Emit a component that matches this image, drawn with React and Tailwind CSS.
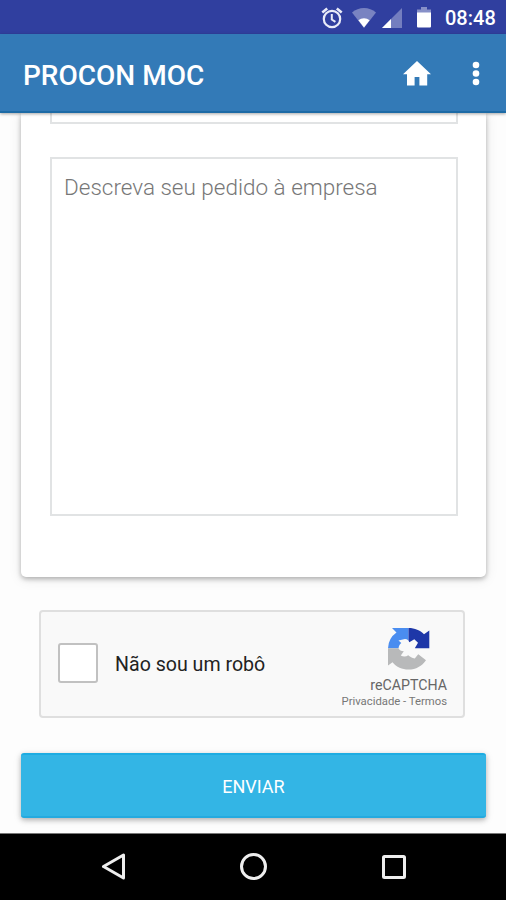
import { useState } from "react";

const AlarmIcon = () => (
  <svg width="22" height="22" viewBox="0 0 22 22" fill="none" stroke="#e9ebf8">
    <circle cx="11" cy="12" r="8.2" strokeWidth="2.2" />
    <path d="M10.8 7v5.500l3.600 2.300" strokeWidth="2" />
    <path d="M1.300 5.400 6.200 1.500M20.700 5.400 15.800 1.500" strokeWidth="2.6" />
  </svg>
);

const WifiIcon = () => (
  <svg width="24" height="20" viewBox="0 0 24 20">
    <path d="M12 20 0 4.400C3.400 1.600 7.500 0 12 0s8.600 1.600 12 4.400Z" fill="#7983c1" />
    <path d="M12 19.500 6.400 12.200a9 9 0 0 1 11.200 0Z" fill="#fff" />
  </svg>
);

const SignalIcon = () => (
  <svg width="20" height="20" viewBox="0 0 20 20">
    <path d="M0 20 20 0v20Z" fill="#747ebf" />
    <path d="M0 20 9 11v9Z" fill="#fff" />
  </svg>
);

const BatteryIcon = () => (
  <svg width="14" height="21" viewBox="0 0 14 21">
    <path d="M4 0h6v2.500h4V7H0V2.500h4Z" fill="#8790c8" />
    <path d="M0 5.500h14V19.500a1 1 0 0 1-1 1H1a1 1 0 0 1-1-1Z" fill="#fff" />
  </svg>
);

const HomeIcon = () => (
  <svg width="28" height="25" viewBox="0 0 28 25" fill="#fff">
    <path d="M14 0 28 13.200h-3.800V24.500h-7.800v-8.500h-4.800v8.500H4V13.200H0Z" />
  </svg>
);

const RecaptchaLogo = () => (
  <svg width="43" height="43" viewBox="0 0 43 43">
    <path d="M21.500 1H5l4.500 4.500A20 20 0 0 0 1 21.200h20.500Z" fill="#4a8df0" />
    <path d="M21.500 1c6.500 0 11.500 2.300 15.500 6.200l5.300-3.700v17.700H21.500Z" fill="#1e37a8" />
    <path d="M1 21.200v17.300l4.500-3.300C9.500 40 15 42.500 21.500 42.500c7.500 0 13.500-3.500 17.500-9.300l-9.300-7.200-3-4.800Z" fill="#b8b9ba" />
    {/* Pinwheel cutout */}
    <path d="M11.500 21.200c.4-2.500 1.300-4 2.800-5.200L11.500 13.500 18 12c2.400.2 3.700 1.500 4.300 3.200l5-3 3.700 3.600-3.200 5.400 4.200 5-4.200 5.200c-2.800-.5-4.900-1.700-6.600-3.200-2 1.500-4.800 1.700-7.400.3l3-4.300c-2.500 0-4.500-1-5.300-3Z" fill="#f9f9f9" />
  </svg>
);

const StatusBar = () => (
  <div className="h-[34px] shrink-0 bg-[#303f9f] flex items-center justify-end pr-[10px] pt-px">
    <AlarmIcon />
    <div className="ml-[9px]">
      <WifiIcon />
    </div>
    <div className="ml-[6px]">
      <SignalIcon />
    </div>
    <div className="ml-[15px]">
      <BatteryIcon />
    </div>
    <span className="ml-[14px] w-[51px] text-[20px] leading-6 font-medium text-white whitespace-nowrap">
      08:48
    </span>
  </div>
);

const Header = () => (
  <header className="relative z-10 h-[79px] shrink-0 bg-[#337ab7] border-b-2 border-[#1d6ba6] shadow-[0_1px_3px_rgba(0,0,0,0.35)] flex items-center pl-[23px] pr-[26px] pt-[2px]">
    <h1 className="flex-1 text-[28px] font-medium text-white pt-[4px]">
      PROCON MOC
    </h1>
    <button type="button" aria-label="Home">
      <HomeIcon />
    </button>
    <button type="button" aria-label="Menu" className="ml-[41px]">
      <svg width="8" height="25" viewBox="0 0 8 25" fill="#fff">
        <circle cx="4" cy="4" r="3.3" />
        <circle cx="4" cy="12.500" r="3.3" />
        <circle cx="4" cy="21" r="3.3" />
      </svg>
    </button>
  </header>
);

const NavBar = () => (
  <nav className="h-[67px] shrink-0 bg-black border-t border-[#777] flex items-center justify-between pl-[101px] pr-[99px]">
    <svg width="25" height="28" viewBox="0 0 25 28" fill="none" stroke="#eee" strokeWidth="3">
      <path d="M2.500 13.500 22.500 2v23Z" strokeLinejoin="round" />
    </svg>
    <svg width="28" height="28" viewBox="0 0 28 28" fill="none" stroke="#eee" strokeWidth="3">
      <circle cx="13.500" cy="13.500" r="12" />
    </svg>
    <svg width="25" height="25" viewBox="0 0 25 25" fill="none" stroke="#eee" strokeWidth="3">
      <rect x="1.500" y="1.500" width="21" height="21" rx="1" />
    </svg>
  </nav>
);

const App = () => {
  const [request, setRequest] = useState("");
  const [checked, setChecked] = useState(false);

  return (
    <div className="h-[900px] w-full overflow-hidden bg-[#fdfdfd] flex flex-col font-[Roboto,sans-serif]">
      <StatusBar />
      <Header />

      <main className="flex-1 flex flex-col pl-[21px] pr-[20px]">
        {/* Form card */}
        <div className="h-[464px] rounded-b-[5px] bg-white px-[29px] shadow-[0_2px_5px_rgba(0,0,0,0.28),0_2px_14px_rgba(0,0,0,0.09)]">
          <div className="h-[11px] w-[408px] border-x-2 border-b-2 border-[#e1e3e4]" />
          <textarea
            value={request}
            onChange={(e) => setRequest(e.target.value)}
            placeholder="Descreva seu pedido à empresa"
            className="block w-[408px] h-[359px] mt-[33px] px-[12px] py-[12px] border-2 border-[#e1e3e4] bg-white resize-none outline-none text-[22.5px] leading-[32px] font-light text-[#666] placeholder:text-[#777]"
          />
        </div>

        {/* Captcha */}
        <div className="mt-[33px] ml-[18px] w-[426px] h-[108px] rounded-[4px] border-2 border-[#dfdfdf] bg-[#f9f9f9] flex items-center pl-[17px] pr-[16px]">
          <button
            type="button"
            role="checkbox"
            aria-checked={checked}
            aria-label="Não sou um robô"
            onClick={() => setChecked(!checked)}
            className="size-[40px] rounded-[3px] border-2 border-[#c1c1c1] bg-white mb-[2px]"
          />
          <span className="ml-[17px] flex-1 pt-px text-[19.6px] text-[#222] whitespace-nowrap">
            Não sou um robô
          </span>
          <div className="flex flex-col items-end pt-[8px]">
            <div className="mr-[17px]">
              <RecaptchaLogo />
            </div>
            <span className="mt-[6px] text-[14.2px] leading-[18px] text-[#666]">
              reCAPTCHA
            </span>
            <span className="text-[11.3px] leading-[15px] text-[#777] whitespace-nowrap">
              Privacidade - Termos
            </span>
          </div>
        </div>

        <button
          type="submit"
          className="mt-[35px] h-[65px] rounded-[3px] bg-[#33b5e5] border-y-2 border-t-[#1dace2] border-b-[#25aadf] shadow-[0_2px_5px_rgba(0,0,0,0.25),0_2px_10px_rgba(0,0,0,0.09)] pt-px text-[18px] text-white"
        >
          ENVIAR
        </button>
      </main>

      <NavBar />
    </div>
  );
};

export default App;
